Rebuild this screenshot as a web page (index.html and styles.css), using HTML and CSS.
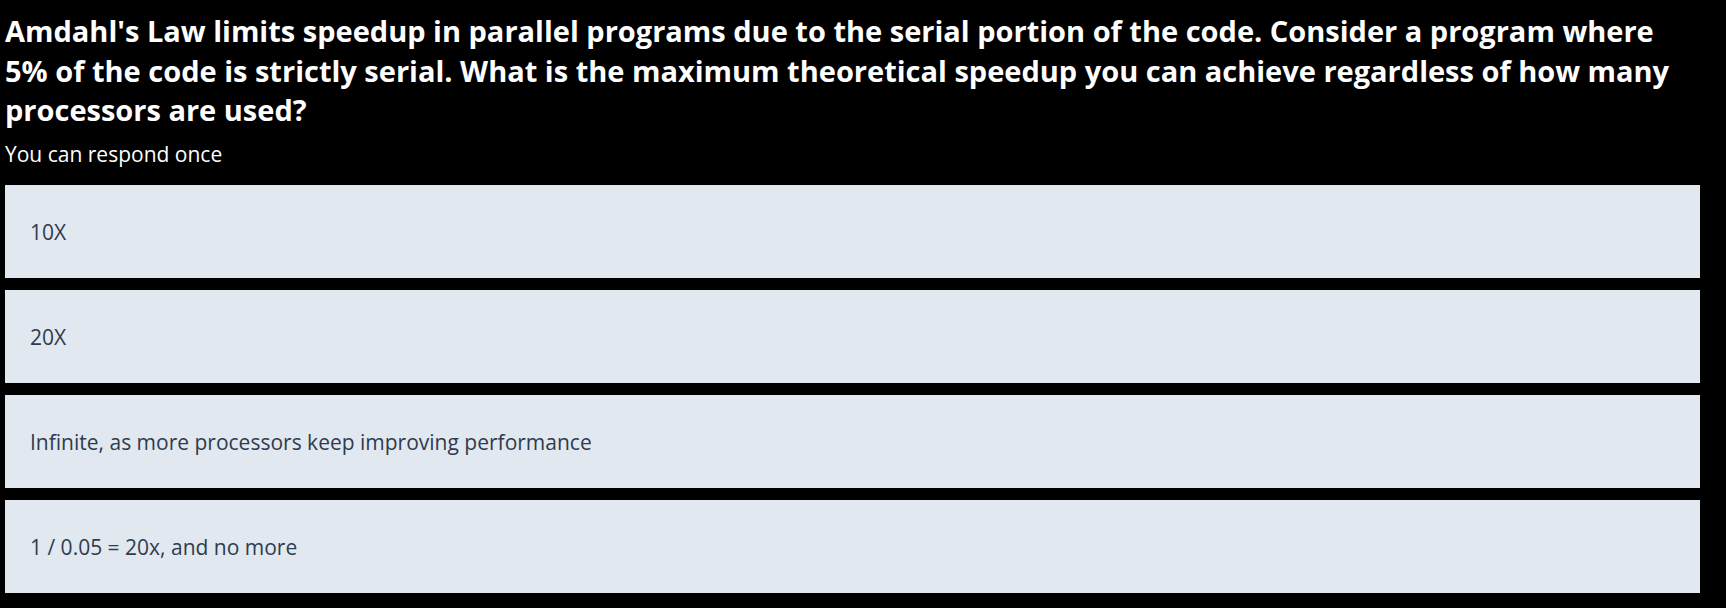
FILE: index.html
```html
<!DOCTYPE html>
<html lang="en">
<head>
<meta charset="utf-8">
<title>Quiz</title>
<link rel="stylesheet" href="styles.css">
</head>
<body>
<main class="quiz">
  <h1 class="question">Amdahl's Law limits speedup in parallel programs due to the serial portion of the code. Consider a program where 5% of the code is strictly serial. What is the maximum theoretical speedup you can achieve regardless of how many processors are used?</h1>
  <p class="hint">You can respond once</p>
  <div class="options">
    <div class="option">10X</div>
    <div class="option">20X</div>
    <div class="option">Infinite, as more processors keep improving performance</div>
    <div class="option">1 / 0.05 = 20x, and no more</div>
  </div>
</main>
</body>
</html>
```
FILE: styles.css
```css
html, body {
  margin: 0;
  padding: 0;
  background: #000;
}
body {
  font-family: "Open Sans", Lato, sans-serif;
}
.quiz {
  width: 1695px;
  padding: 11px 0 0 5px;
}
.question {
  margin: 0;
  color: #fff;
  font-size: 29px;
  font-weight: 700;
  line-height: 39.7px;
}
.hint {
  margin: 10px 0 0;
  color: #fff;
  font-size: 21px;
  line-height: 28px;
}
.options {
  display: flex;
  flex-direction: column;
  gap: 12px;
  margin-top: 17px;
}
.option {
  height: 93px;
  display: flex;
  align-items: center;
  padding-left: 25px;
  background: #e1e8f0;
  color: #2f3b4e;
  font-size: 21px;
}
```
